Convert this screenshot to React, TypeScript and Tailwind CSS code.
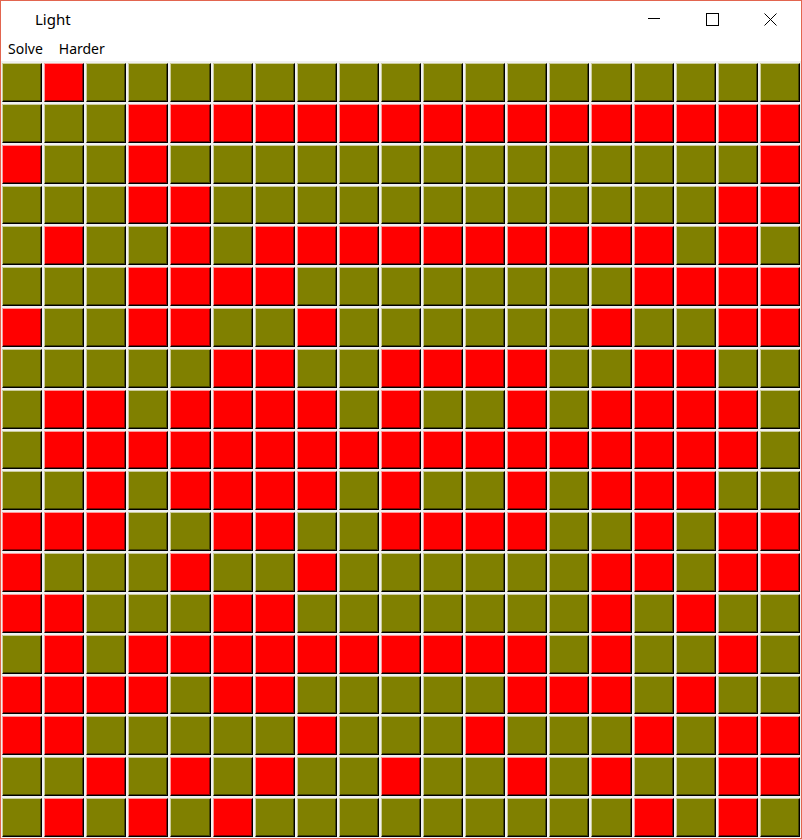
import React from "react";

const ROWS: string[] = [
  "OROOOOOOOOOOOOOOOOO",
  "OOORRRRRRRRRRRRRRRR",
  "ROOROOOOOOOOOOOOOOR",
  "OOORROOOOOOOOOOOORR",
  "OROORORRRRRRRRRRORO",
  "OOORRRROOOOOOOORRRR",
  "ROORROOROOOOOOROORR",
  "OOOOORROORRRROORROO",
  "ORRORRRROROORORRRRO",
  "ORRRRRRRRRRRRRRRRRO",
  "OORORRRROROORORRROO",
  "RRROORROORRRROORORR",
  "ROOOROOROOOOOORRORR",
  "RROOORROOOOOOOROROO",
  "ORORRRRRRRRRRORO ORO".replace(" ", ""),
  "RRRRORROOOOORRROROO",
  "RROOOOOROOOROOORORR",
  "OOROROROOROOROROORR",
  "OROROROOOOOOOOOROROO".slice(0, 19),
];

function Cell({ red }: { red: boolean }) {
  return (
    <div
      className={
        (red ? "bg-[#ff0000]" : "bg-[#808000]") +
        " border-t border-l border-t-[rgba(255,255,255,0.6)] border-l-[rgba(255,255,255,0.6)] border-r border-b border-r-black border-b-black shadow-[inset_-1px_-1px_0_rgba(0,0,0,0.45)]"
      }
    />
  );
}

export default function App() {
  return (
    <div
      className="w-[802px] h-[839px] border border-[#e2654f] bg-white flex flex-col overflow-hidden"
      style={{ fontFamily: '"Noto Sans", "Open Sans", sans-serif' }}
    >
      {/* Title bar */}
      <div className="h-[38px] flex items-start shrink-0">
        <div className="pl-[34px] pt-[11px] text-[15px] text-black leading-none">Light</div>
        <div className="ml-auto flex h-full pr-[2px]">
          <div className="w-[58px] h-full flex items-start justify-center pt-[12px]">
            <svg width="12" height="12" viewBox="0 0 12 12">
              <path d="M0 5.5H12" stroke="black" strokeWidth="1" />
            </svg>
          </div>
          <div className="w-[58px] h-full flex items-start justify-center pt-[12px]">
            <svg width="13" height="13" viewBox="0 0 13 13">
              <rect x="0.5" y="0.5" width="12" height="12" fill="none" stroke="black" strokeWidth="1" />
            </svg>
          </div>
          <div className="w-[58px] h-full flex items-start justify-center pt-[12px]">
            <svg width="13" height="13" viewBox="0 0 13 13">
              <path d="M0.5 0.5L12.5 12.5M12.5 0.5L0.5 12.5" stroke="black" strokeWidth="1" />
            </svg>
          </div>
        </div>
      </div>
      {/* Menu bar */}
      <div className="h-[22px] flex items-start shrink-0 text-[14px] text-black leading-none pt-[3px]">
        <div className="pl-[7px] pr-[9px]">Solve</div>
        <div className="px-[7px]">Harder</div>
      </div>
      {/* Grid */}
      <div className="flex-1 bg-[#f0f0f0] pt-[2px] pb-[1px] px-[1px] grid grid-cols-[repeat(19,minmax(0,1fr))] grid-rows-[repeat(19,minmax(0,1fr))] gap-[2px]">
        {ROWS.map((row, r) =>
          row.split("").map((c, i) => <Cell key={r + "-" + i} red={c === "R"} />)
        )}
      </div>
    </div>
  );
}
